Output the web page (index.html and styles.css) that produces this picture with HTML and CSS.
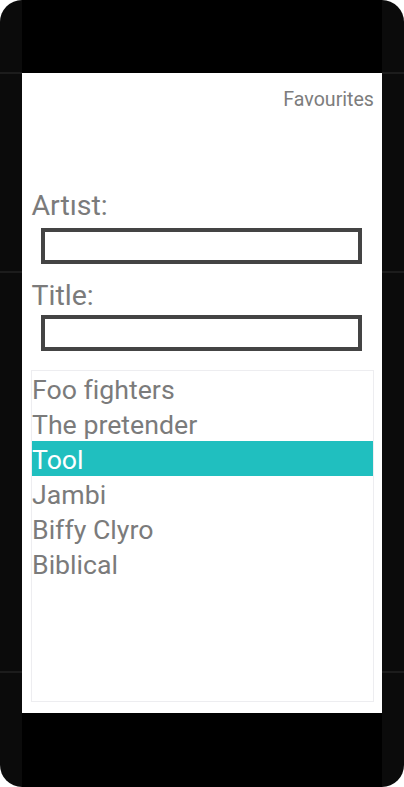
FILE: index.html
```html
<!DOCTYPE html>
<html lang="en">
<head>
<meta charset="utf-8">
<title>Favourites</title>
<link rel="stylesheet" href="styles.css">
</head>
<body>
<div class="phone">
  <div class="side">
    <div class="seg seg-a"></div>
    <div class="line"></div>
    <div class="seg seg-b"></div>
    <div class="line"></div>
    <div class="seg seg-c"></div>
    <div class="line"></div>
  </div>
  <div class="center">
    <div class="bezel-top"></div>
    <div class="screen">
      <div class="topbar"><span class="fav">Favourites</span></div>
      <div class="field field-artist">
        <label class="label">Artıst:</label>
        <input class="input" type="text">
      </div>
      <div class="field field-title">
        <label class="label">Title:</label>
        <input class="input" type="text">
      </div>
      <ul class="list">
        <li class="item">Foo fighters</li>
        <li class="item">The pretender</li>
        <li class="item selected">Tool</li>
        <li class="item">Jambi</li>
        <li class="item">Biffy Clyro</li>
        <li class="item">Biblical</li>
      </ul>
    </div>
    <div class="bezel-bottom"></div>
  </div>
  <div class="side">
    <div class="seg seg-a"></div>
    <div class="line"></div>
    <div class="seg seg-b"></div>
    <div class="line"></div>
    <div class="seg seg-c"></div>
    <div class="line"></div>
  </div>
</div>
</body>
</html>
```

FILE: styles.css
```css
* { box-sizing: border-box; }
html, body {
  margin: 0;
  padding: 0;
  background: #ffffff;
}
body {
  font-family: Roboto, "Liberation Sans", sans-serif;
  font-variant-ligatures: none;
}
.phone {
  width: 404px;
  height: 787px;
  border-radius: 22px;
  overflow: hidden;
  background: #0b0b0b;
  display: grid;
  grid-template-columns: 22px 360px 22px;
}
.side {
  display: flex;
  flex-direction: column;
}
.seg-a { height: 72px; }
.seg-b { height: 197px; }
.seg-c { height: 398px; }
.line {
  height: 2px;
  background: #1c1c1c;
}
.center {
  display: flex;
  flex-direction: column;
  background: #000000;
}
.bezel-top { height: 73px; }
.bezel-bottom { flex: 1; }
.screen {
  height: 640px;
  background: #ffffff;
  padding: 15px 8px 0 9px;
  display: flex;
  flex-direction: column;
}
.topbar {
  display: flex;
  justify-content: flex-end;
  height: 24px;
}
.fav {
  font-size: 19.6px;
  line-height: 24px;
  color: #7d7d7d;
}
.field {
  display: flex;
  flex-direction: column;
  align-items: flex-start;
}
.field-artist { margin-top: 78px; }
.field-title { margin-top: 16px; }
.label {
  font-size: 28.5px;
  line-height: 32px;
  color: #7b7b7b;
  padding-left: 0.5px;
}
.input {
  margin: 6px 0 0 10px;
  width: 321px;
  height: 36px;
  border: 4px solid #444444;
  border-radius: 0;
  background: #ffffff;
  padding: 0 4px;
  outline: none;
  font: inherit;
}
.field-title .input { margin-top: 3px; }
.list {
  list-style: none;
  margin: 19px 0 0 0;
  padding: 0;
  height: 332px;
  border: 1px solid #ededf0;
}
.item {
  height: 35px;
  padding: 3px 0 0 0;
  font-size: 26.7px;
  line-height: 32px;
  color: #7b7b7b;
}
.item.selected {
  background: #20bfbf;
  color: #ffffff;
}
```
